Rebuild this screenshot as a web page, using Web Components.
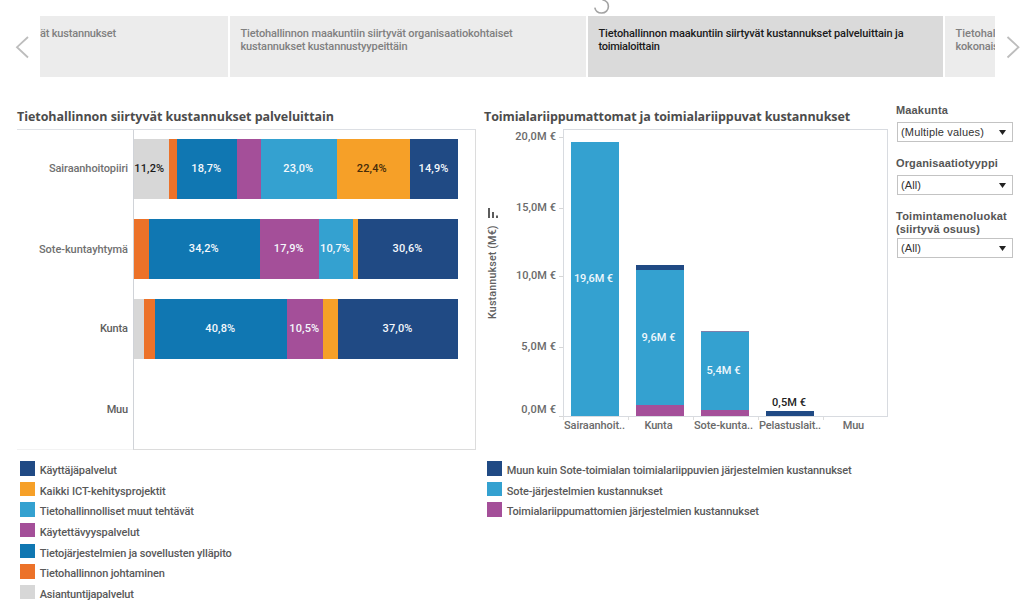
<!DOCTYPE html>
<html lang="fi">
<head>
<meta charset="utf-8">
<title>Tietohallinnon kustannukset</title>
<style>
html,body{margin:0;padding:0;background:#fff}
body{width:1023px;height:611px;overflow:hidden;font-family:Roboto,"Liberation Sans",sans-serif}
</style>
</head>
<body>
<cost-dashboard></cost-dashboard>
<script>
const C={navy:'#204a84',amber:'#f6a028',sky:'#34a1d0',purple:'#a44f99',blue:'#1077b2',orange:'#ec7229',grey:'#d7d7d7'};
class Base extends HTMLElement{
  constructor(){super();this.attachShadow({mode:'open'});}
  render(css,html){this.shadowRoot.innerHTML='<style>*{box-sizing:border-box}'+css+'</style>'+html;}
}
/* One line of text, tracked so that it fills the measure given in "w". */
class TextRun extends Base{
  connectedCallback(){
    this.render(':host{display:inline-block;white-space:pre}span{display:inline-block}','<span><slot></slot></span>');
    const w=+this.getAttribute('w'),s=this.shadowRoot.querySelector('span');
    if(!w)return;
    const n=this.textContent.length,have=s.getBoundingClientRect().width;
    const ls=(w-have)/n;
    s.style.letterSpacing=ls+'px';
    s.style.marginRight=-ls+'px';
  }
}
customElements.define('text-run',TextRun);

class StoryPoint extends Base{
  connectedCallback(){
    this.render(`:host{display:block;flex:none;height:61px;background:#ececec;color:#808080;padding:11px 0 0 10.5px;overflow:hidden;font:500 11px/13px Roboto,sans-serif}
    :host([active]){background:#dadada;color:#1b1b1b}:host([cut]){padding-left:0}div{display:flex;flex-direction:column;align-items:flex-start}`,'<div><slot></slot></div>');
  }
}
customElements.define('story-point',StoryPoint);

class StoryNav extends Base{
  connectedCallback(){
    this.render(`:host{display:flex;width:1023px;height:77px;padding-top:16px;position:relative}
    .a{width:40px;height:61px;flex:none}.s{display:flex;gap:2px;width:955px;overflow:hidden}.r{width:28px}
    svg{display:block}.spin{position:absolute;left:590px;top:0}`,
    `<svg class="a" viewBox="0 0 40 61" fill="none" stroke="#bdbdbd" stroke-width="1.8"><path d="M28 21 17 31.2 28 41.5"/></svg>
    <div class="s">
      <story-point cut style="width:188px"><text-run w="76">ät kustannukset</text-run></story-point>
      <story-point style="width:356px"><text-run w="272">Tietohallinnon maakuntiin siirtyvät organisaatiokohtaiset</text-run><text-run w="167">kustannukset kustannustyypeittäin</text-run></story-point>
      <story-point active style="width:355px"><text-run w="305">Tietohallinnon maakuntiin siirtyvät kustannukset palveluittain ja</text-run><text-run w="61">toimialoittain</text-run></story-point>
      <story-point style="width:50px"><text-run w="40">Tietohal</text-run><text-run w="43">kokonais</text-run></story-point>
    </div>
    <svg class="a r" viewBox="0 0 28 61" fill="none" stroke="#bdbdbd" stroke-width="1.8"><path d="M12.5 21 23.5 31.2 12.5 41.5"/></svg>
    <svg class="spin" width="24" height="15" fill="none" stroke="#a3a3a3" stroke-width="1.6"><path d="M4.8 7.6C5.5 11 8.3 13 11.6 13C15.6 13 18.4 10 18.4 6.5C18.4 3 15.8.6 12.4-.2"/></svg>`);
  }
}
customElements.define('story-nav',StoryNav);

class ChartTitle extends Base{
  connectedCallback(){this.render(':host{display:block;height:24px;font:700 12.5px/23px "Open Sans",sans-serif;color:#4c4c4c}','<slot></slot>');}
}
customElements.define('chart-title',ChartTitle);

class ShareChart extends Base{
  connectedCallback(){
    const rows=[
      ['Sairaanhoitopiiri',79,[[34.5,'grey','11,2%'],[8,'orange'],[60.5,'blue','18,7%'],[24,'purple'],[75.5,'sky','23,0%'],[73.5,'amber','22,4%'],[48,'navy','14,9%']]],
      ['Sote-kuntayhtymä',89,[[14.5,'orange'],[111.5,'blue','34,2%'],[58.5,'purple','17,9%'],[34,'sky','10,7%'],[5.5,'amber'],[100,'navy','30,6%']]],
      ['Kunta',28,[[10,'grey'],[10.5,'orange'],[132.5,'blue','40,8%'],[35.5,'purple','10,5%'],[15.5,'amber'],[120,'navy','37,0%']]],
      ['Muu',21,[]]];
    this.render(`:host{display:block;width:459px;height:321px;border-top:1px solid #dcdfe4;border-right:1px solid #dcdcdc}
    .row{display:grid;grid-template-columns:116px 1fr;height:80px}
    .row:last-of-type .cell{border-bottom:1px solid #dcdcdc}
    .name{color:#707070;font:500 11px/78px Roboto,sans-serif;text-align:right;padding-right:5px}
    .row:nth-of-type(n+3) .name{color:#5e5e5e}.row:nth-of-type(even) .name{padding-top:1px}.row:last-of-type .name{border-bottom:1px solid #f3f3f3}
    .cell{border-left:1px solid #d0d3d8;display:flex;align-items:center;padding-bottom:2px}
    .bar{display:flex;width:324px;height:60px}
    .seg{display:flex;flex:none;justify-content:center;align-items:center;color:#f4f8fc;font:500 11px/13px Roboto,sans-serif;padding:0 1px 1px 0}
    .grey{color:#1a1a1a;padding-right:4px}.amber{color:#472c0a;padding-right:3px}`,
    rows.map(([n,w,s])=>`<div class="row"><div class="name"><text-run w="${w}">${n}</text-run></div><div class="cell"><div class="bar">${s.map(([x,c,t])=>`<div class="seg ${c}" style="width:${x}px;background:${C[c]}">${t?`<text-run w="30">${t}</text-run>`:''}</div>`).join('')}</div></div></div>`).join(''));
  }
}
customElements.define('share-chart',ShareChart);

class CostChart extends Base{
  connectedCallback(){
    const cats=[['Sairaanhoit..',61,[[274.5,'sky','19,6M €',39]]],['Kunta',28,[[5,'navy'],[135,'sky','9,6M €',34],[11.5,'purple']]],
      ['Sote-kunta..',59,[[77.5,'sky','5,4M €',34],[6.5,'purple']]],['Pelastuslait..',62,[[5.5,'navy']]],['Muu',21,[]]];
    this.render(`:host{display:grid;grid-template-columns:18px 61px 325px;width:404px;height:305px}
    .v{display:flex;flex-direction:column;align-items:center;padding-top:78px;color:#606060}
    .v svg{display:block;width:14px;height:12px;flex:none}.v div{writing-mode:vertical-rl;transform:rotate(180deg);margin-top:6px;height:94px;font:500 10.8px/14px Roboto,sans-serif;letter-spacing:.1px}
    .ax{display:flex;flex-direction:column;align-items:flex-end;color:#6a6a6a;font:500 11px/14px Roboto,sans-serif;padding-top:1px}
    .tick{display:flex;gap:3px;align-items:center;height:14px}.tick i{width:4px;height:1px;background:#d6d6d6}.tick:last-of-type i{margin-top:13px}
    .plot{display:flex;height:288px;border:1px solid #d8dbe0;align-items:flex-end}
    .cat{width:65px;display:flex;flex-direction:column;align-items:center;flex:none}.cat .b{width:48.5px;margin-right:3px}
    .s{display:flex;align-items:center;justify-content:center;color:#eef7fc;font:500 11px/13px Roboto,sans-serif;padding-right:3px}
    .out{color:#222;font:500 11px/13px Roboto,sans-serif;margin:0 5px 2px 0}
    .names{display:flex;height:17px;color:#6a6a6a;font:500 11px/17px Roboto,sans-serif}.names div{width:65px;flex:none;text-align:center;border:0 solid transparent;border-left-width:1px;border-image:linear-gradient(#ddd 4px,transparent 4px) 1;padding-right:5px;white-space:nowrap}`,
    `<div class="v"><svg viewBox="0 0 14 12" fill="#5c5c5c"><path d="M2 1h2v10H2zM6 5h2v6H6zM10 8.5h2V11h-2z"/></svg><div><text-run>Kustannukset (M€)</text-run></div></div>
     <div class="ax">${[['20,0M €',41,0],['15,0M €',40,57],['10,0M €',40,54],['5,0M €',35,57],['0,0M €',35,49]].map(([t,w,m])=>`<div class="tick" style="margin-top:${m}px"><text-run w="${w}">${t}</text-run><i></i></div>`).join('')}</div>
     <div><div class="plot">${cats.map(([n,w,s],k)=>`<div class="cat">${k==3?'<div class="out"><text-run w="34">0,5M €</text-run></div>':''}<div class="b"${k==2?' style="border-top:1px solid #7d7fab"':''}>${s.map(([h,c,t,tw])=>`<div class="s" style="height:${h}px;background:${C[c]}">${t?`<text-run w="${tw}">${t}</text-run>`:''}</div>`).join('')}</div></div>`).join('')}</div>
     <div class="names">${cats.map(([n,w])=>`<div><text-run w="${w}">${n}</text-run></div>`).join('')}</div></div>`);
  }
}
customElements.define('cost-chart',CostChart);

class LegendList extends Base{
  connectedCallback(){
    const sets={services:[['navy','Käyttäjäpalvelut',77],['amber','Kaikki ICT-kehitysprojektit',126],['sky','Tietohallinnolliset muut tehtävät',154],['purple','Käytettävyyspalvelut',100],['blue','Tietojärjestelmien ja sovellusten ylläpito',192],['orange','Tietohallinnon johtaminen',125],['grey','Asiantuntijapalvelut',94]],
    systems:[['navy','Muun kuin Sote-toimialan toimialariippuvien järjestelmien kustannukset',345],['sky','Sote-järjestelmien kustannukset',156],['purple','Toimialariippumattomien järjestelmien kustannukset',252]]};
    this.render(`:host{display:block}.i{display:flex;height:20.65px;gap:5.2px}.q{width:14.5px;height:14.5px;flex:none}.t{font:500 11px/20px Roboto,sans-serif;color:#595959}`,
    sets[this.getAttribute('set')].map(([c,t,w])=>`<div class="i"><div class="q" style="background:${C[c]}"></div><div class="t"><text-run w="${w}">${t}</text-run></div></div>`).join(''));
  }
}
customElements.define('legend-list',LegendList);

class FilterBox extends Base{
  connectedCallback(){
    this.render(`:host{display:block}.l{display:flex;flex-direction:column;align-items:flex-start;font:bold 11px/13px "Liberation Sans",sans-serif;color:#555;margin-bottom:5px}
    :host([tight]) .l{margin-bottom:2px}
    .b{display:flex;justify-content:space-between;align-items:center;width:116px;height:20px;margin-left:1px;border:1px solid #c3c3c3;padding:0 6px 0 3px;font:11px/18px "Liberation Sans",sans-serif;color:#333}`,
    `<div class="l"><slot name="label"></slot></div><div class="b"><slot></slot><svg width="7" height="5"><path d="M0 0h7L3.5 5z" fill="#222"/></svg></div>`);
  }
}
customElements.define('filter-box',FilterBox);

class CostDashboard extends Base{
  connectedCallback(){
    this.render(`:host{display:block;width:1023px;height:611px;overflow:hidden}
    main{display:grid;grid-template-columns:459px 404px 117px;column-gap:8px;padding:28px 0 0 17px}
    legend-list{margin:11px 0 0 3px}.c2 legend-list{margin-top:27px}
    .f{display:flex;flex-direction:column;margin-top:-1px}`,
    `<story-nav></story-nav><main>
    <section><chart-title><text-run w="317">Tietohallinnon siirtyvät kustannukset palveluittain</text-run></chart-title><share-chart></share-chart><legend-list set="services"></legend-list></section>
    <section class="c2"><chart-title><text-run w="366">Toimialariippumattomat ja toimialariippuvat kustannukset</text-run></chart-title><cost-chart></cost-chart><legend-list set="systems"></legend-list></section>
    <section class="f">
     <filter-box style="height:53px"><text-run slot="label" w="52">Maakunta</text-run><text-run w="83">(Multiple values)</text-run></filter-box>
     <filter-box style="height:53px"><text-run slot="label" w="102">Organisaatiotyyppi</text-run><text-run w="20">(All)</text-run></filter-box>
     <filter-box tight><text-run slot="label" w="111">Toimintamenoluokat</text-run><text-run slot="label" w="84">(siirtyvä osuus)</text-run><text-run w="20">(All)</text-run></filter-box>
    </section></main>`);
  }
}
customElements.define('cost-dashboard',CostDashboard);
</script>
</body>
</html>
